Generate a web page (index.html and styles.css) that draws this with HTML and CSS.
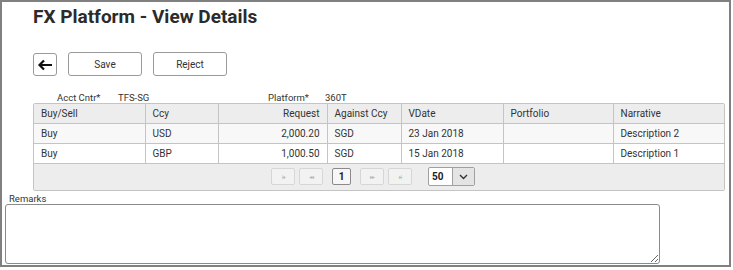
FILE: index.html
```html
<!DOCTYPE html>
<html lang="en">
<head>
    <meta charset="UTF-8">
    <title>FX Platform - View Details</title>
    <link rel="stylesheet" href="styles.css">
</head>
<body>
    <div class="frame">
        <h1 class="judul">FX Platform - View Details</h1>

        <div class="toolbar">
            <button class="tombol tombol-kembali">
                <svg width="16" height="12" viewBox="0 0 16 12">
                    <path d="M15 6H2.5M7 1.5L2.5 6L7 10.5" fill="none" stroke="#111" stroke-width="2.2"/>
                </svg>
            </button>
            <button class="tombol tombol-aksi">Save</button>
            <button class="tombol tombol-aksi">Reject</button>
        </div>

        <div class="info">
            <span>Acct Cntr*</span><span>TFS-SG</span>
            <span>Platform*</span><span>360T</span>
        </div>

        <div class="grid">
            <table class="tabel">
                <thead>
                    <tr>
                        <th class="c1">Buy/Sell</th>
                        <th class="c2">Ccy</th>
                        <th class="c3 kanan">Request</th>
                        <th class="c4">Against Ccy</th>
                        <th class="c5">VDate</th>
                        <th class="c6">Portfolio</th>
                        <th class="c7">Narrative</th>
                    </tr>
                </thead>
                <tbody>
                    <tr class="ganjil">
                        <td>Buy</td><td>USD</td><td class="kanan">2,000.20</td><td>SGD</td><td>23 Jan 2018</td><td></td><td>Description 2</td>
                    </tr>
                    <tr>
                        <td>Buy</td><td>GBP</td><td class="kanan">1,000.50</td><td>SGD</td><td>15 Jan 2018</td><td></td><td>Description 1</td>
                    </tr>
                </tbody>
            </table>
            <div class="pager">
                <span class="hal mati">|&#9666;</span>
                <span class="hal mati">&#9666;&#9666;</span>
                <span class="hal aktif">1</span>
                <span class="hal mati">&#9656;&#9656;</span>
                <span class="hal mati">&#9656;|</span>
                <span class="ukuran">
                    <span class="ukuran-nilai">50</span>
                    <span class="ukuran-panah">
                        <svg width="9" height="6" viewBox="0 0 9 6"><path d="M1 1L4.5 4.5L8 1" fill="none" stroke="#333" stroke-width="1.4"/></svg>
                    </span>
                </span>
            </div>
        </div>

        <div class="remarks-label">Remarks</div>
        <textarea class="remarks"></textarea>
    </div>
</body>
</html>
```

FILE: styles.css
```css
body {
    margin: 0;
    font-family: Roboto, "Liberation Sans", Arial, sans-serif;
    color: #333;
    background: #fff;
}

.frame {
    width: 727px;
    height: 263px;
    border: 2px solid #808080;
    position: relative;
}

.judul {
    margin: 0;
    padding: 3px 0 0 31px;
    font-size: 19px;
    font-weight: bold;
    color: #2b2b2b;
    height: 50px;
    box-sizing: border-box;
}

.toolbar {
    display: flex;
    gap: 11px;
    padding-left: 31px;
    height: 24px;
}

.tombol {
    background: #fff;
    border: 1px solid #9a9a9a;
    border-radius: 3px;
    font-family: inherit;
    font-size: 10px;
    color: #333;
    height: 24px;
    padding: 0;
    display: flex;
    align-items: center;
    justify-content: center;
}

.tombol-kembali {
    width: 24px;
    height: 23px;
    margin-top: 1px;
}

.tombol-aksi {
    width: 74px;
}

.info {
    display: grid;
    grid-template-columns: 61px 150px 57px auto;
    padding-left: 55px;
    font-size: 9.5px;
    height: 13px;
    align-items: end;
    margin-top: 14px;
}

.grid {
    margin-left: 31px;
    width: 690px;
    border: 1px solid #c4c4c4;
    border-radius: 2px;
}

.tabel {
    width: 100%;
    border-collapse: collapse;
    font-size: 10px;
    table-layout: fixed;
}

.tabel th,
.tabel td {
    box-sizing: border-box;
    height: 19px;
    padding: 0 7px;
    text-align: left;
    font-weight: normal;
    border-left: 1px solid #c4c4c4;
    border-bottom: 1px solid #c4c4c4;
    white-space: nowrap;
}

.tabel td {
    height: 20px;
}

.tabel th:first-child,
.tabel td:first-child {
    border-left: none;
}

.tabel thead tr {
    background: #ededed;
}

.tabel tr.ganjil {
    background: #f8f8f8;
}

.tabel .kanan {
    text-align: right;
}

.c1 { width: 111px; }
.c2 { width: 73px; }
.c3 { width: 109px; }
.c4 { width: 74px; }
.c5 { width: 102px; }
.c6 { width: 110px; }

.pager {
    background: #ededed;
    height: 26px;
    display: flex;
    align-items: center;
    justify-content: center;
    padding-right: 12px;
    gap: 4px;
}

.hal {
    width: 22px;
    height: 15px;
    border: 1px solid #d6d6d6;
    border-radius: 2px;
    background: #f2f2f2;
    font-size: 6px;
    color: #b8b8b8;
    display: flex;
    align-items: center;
    justify-content: center;
    letter-spacing: -1px;
}

.hal.aktif {
    width: 17px;
    margin: 0 5px;
    border-color: #8a8a8a;
    background: #f7f7f7;
    color: #222;
    font-size: 10px;
    font-weight: bold;
    letter-spacing: 0;
}

.ukuran {
    display: flex;
    margin-left: 12px;
    height: 17px;
    border: 1px solid #a0a0a0;
    border-radius: 2px;
    background: #fff;
}

.ukuran-nilai {
    width: 20px;
    font-size: 10px;
    font-weight: bold;
    color: #222;
    display: flex;
    align-items: center;
    padding-left: 3px;
}

.ukuran-panah {
    width: 21px;
    background: #e4e4e4;
    border-left: 1px solid #a0a0a0;
    display: flex;
    align-items: center;
    justify-content: center;
}

.remarks-label {
    font-size: 9.5px;
    padding-left: 7px;
    margin-top: 2px;
    height: 11px;
}

.remarks {
    display: block;
    margin-left: 3px;
    width: 655px;
    height: 60px;
    box-sizing: border-box;
    border: 1px solid #8a8a8a;
    border-radius: 3px;
    resize: vertical;
}
```
